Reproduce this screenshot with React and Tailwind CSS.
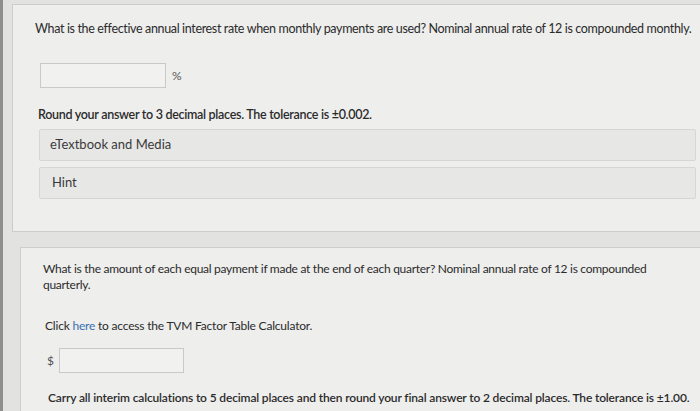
export default function App() {
  return (
    <div
      className="w-[700px] h-[411px] overflow-hidden flex bg-[#e2e2e1] text-[#2b2b2b]"
      style={{ fontFamily: "Lato, 'Open Sans', sans-serif" }}
    >
      <div className="w-[3px] shrink-0 bg-[#8e8e8e]" />

      <div className="flex-1 flex flex-col pt-[4px]">
        {/* question 1 */}
        <div className="ml-[9px] -mr-[10px] h-[228px] border border-[#cdcdcd] bg-[#eeeeed] pl-[22px] pr-[12px]">
          <p className="pt-[16px] text-[12.5px] leading-4 tracking-[-0.35px] whitespace-nowrap">
            What is the effective annual interest rate when monthly payments are used? Nominal annual rate of 12 is compounded monthly.
          </p>

          <div className="mt-[26px] ml-[5px] flex items-center gap-[6px]">
            <div className="w-[126px] h-[25px] border border-[#c9c9c9] bg-[#f1f1f0]" />
            <span className="text-[12px] text-[#555]">%</span>
          </div>

          <p className="mt-[19px] ml-[3px] text-[12.5px] leading-4 font-semibold tracking-[-0.3px]">
            Round your answer to 3 decimal places. The tolerance is ±0.002.
          </p>

          <div className="mt-[6px] ml-[4px] mr-[1px] flex flex-col gap-[6px]">
            <div className="h-[32px] flex items-center pl-[10px] border border-[#d6d6d6] bg-[#e7e7e6] rounded-[2px] text-[13px] text-[#3a3a3a]">
              eTextbook and Media
            </div>
            <div className="h-[32px] flex items-center pl-[12px] border border-[#d6d6d6] bg-[#e7e7e6] rounded-[2px] text-[13px] text-[#3a3a3a]">
              Hint
            </div>
          </div>
        </div>

        {/* question 2 */}
        <div className="mt-[15px] ml-[17px] -mr-[10px] flex-1 border-l border-t border-[#cdcdcd] bg-[#eeeeed] pl-[22px]">
          <p className="pt-[13px] w-[625px] text-[12px] leading-4 tracking-[-0.28px]">
            What is the amount of each equal payment if made at the end of each quarter? Nominal annual rate of 12 is compounded quarterly.
          </p>

          <p className="mt-[25px] ml-[2px] text-[12px] leading-4 tracking-[-0.2px]">
            Click <span className="text-[#3a6fb0]">here</span> to access the TVM Factor Table Calculator.
          </p>

          <div className="mt-[14px] ml-[4px] flex items-center gap-[5px]">
            <span className="text-[12px] text-[#555]">$</span>
            <div className="w-[125px] h-[25px] border border-[#c9c9c9] bg-[#f1f1f0]" />
          </div>

          <p className="mt-[17px] ml-[5px] text-[12px] leading-4 font-semibold tracking-[-0.15px] whitespace-nowrap">
            Carry all interim calculations to 5 decimal places and then round your final answer to 2 decimal places. The tolerance is ±1.00.
          </p>
        </div>
      </div>
    </div>
  );
}
